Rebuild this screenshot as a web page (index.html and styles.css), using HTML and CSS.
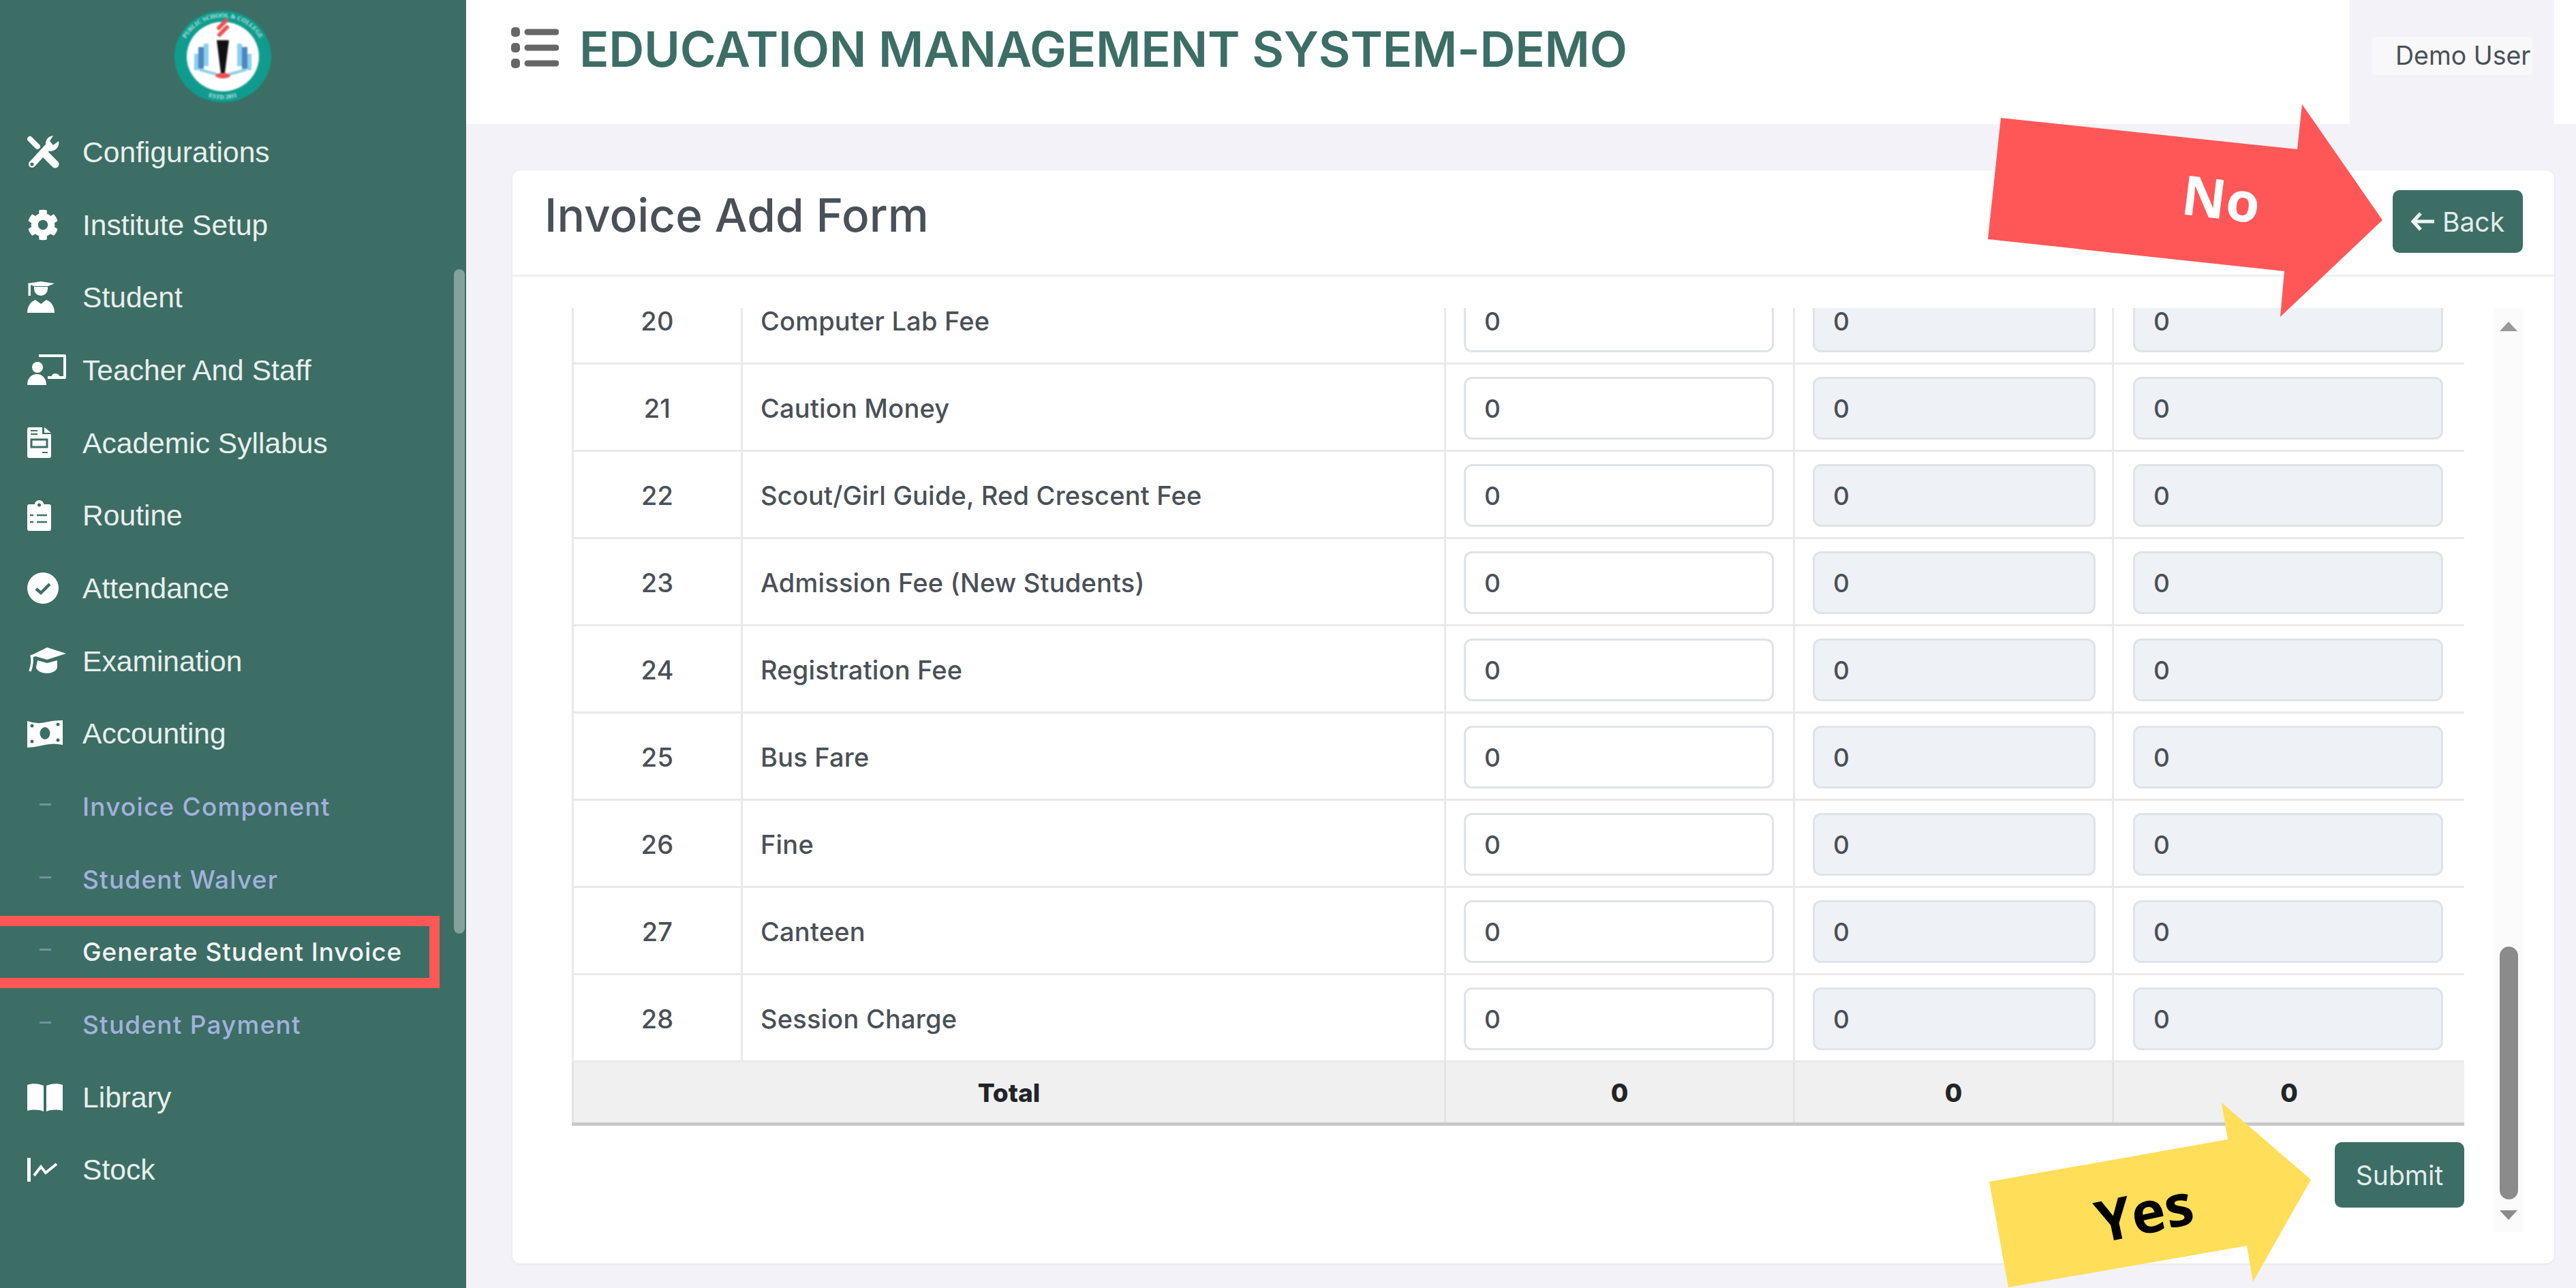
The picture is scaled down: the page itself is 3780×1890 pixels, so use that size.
FILE: index.html
```html
<!DOCTYPE html>
<html lang="en">

<head>
  <meta charset="UTF-8" />
  <meta name="viewport" content="width=device-width, initial-scale=1.0" />
  <title>Invoice Add Form</title>
  <link rel="stylesheet" href="styles.css">
</head>

<body>
  <aside class="sidebar">
    <div class="logo">
      <svg class="logo-img" viewBox="0 0 150 140">
        <defs>
          <path id="ringTop" d="M16 84 A61 57 0 1 1 134 84" />
          <path id="ringBottom" d="M40 122 A61 57 0 0 0 110 122" />
        </defs>
        <ellipse cx="75" cy="70" rx="71" ry="67" fill="#0f9c8e" />
        <ellipse cx="75" cy="70" rx="53" ry="51" fill="#fff" />
        <text class="ring-text"><textPath href="#ringTop" startOffset="50%" text-anchor="middle">PUBLIC SCHOOL &amp; COLLEGE</textPath></text>
        <text class="ring-text"><textPath href="#ringBottom" startOffset="50%" text-anchor="middle">ESTD 2011</textPath></text>
        <rect x="33" y="66" width="6" height="24" fill="#8ad0ea" />
        <rect x="39" y="56" width="8" height="32" fill="#4d86c0" />
        <rect x="47" y="51" width="7" height="33" fill="#8ad0ea" />
        <rect x="111" y="66" width="6" height="24" fill="#8ad0ea" />
        <rect x="103" y="56" width="8" height="32" fill="#4d86c0" />
        <rect x="96" y="51" width="7" height="33" fill="#8ad0ea" />
        <path d="M40 89 L66 96 M110 89 L84 96" stroke="#8ad0ea" stroke-width="4" />
        <path d="M66 46 H84 L78 94 H72 Z" fill="#111" />
        <path d="M70 38 L81 27 M69 28 L80 17" stroke="#ea5050" stroke-width="6" stroke-linecap="round" />
        <ellipse cx="75" cy="98" rx="11" ry="4" fill="#ea5050" />
      </svg>
    </div>
    <nav class="menu">
      <a class="menu-item">
        <span class="menu-icon">
          <svg viewBox="0 0 60 50">
            <path d="M4 6 L15 17" stroke="#fff" stroke-width="8" stroke-linecap="round" />
            <path d="M24 26 L41 43" stroke="#fff" stroke-width="11" stroke-linecap="round" />
            <path d="M7 43 L30 18" stroke="#fff" stroke-width="10" stroke-linecap="round" />
            <circle cx="7" cy="43" r="2.5" fill="#3c6e65" />
            <path d="M27 13 A12 12 0 0 1 38 1 L33 9 L38 15 L46 9 A12 12 0 0 1 30 23 Z" fill="#fff" />
          </svg>
        </span>
        <span>Configurations</span>
      </a>
      <a class="menu-item">
        <span class="menu-icon">
          <svg viewBox="0 0 60 50">
            <path transform="translate(0 2) scale(.09)" d="M487.4 315.7l-42.6-24.6c4.3-23.2 4.3-47 0-70.2l42.6-24.6c4.9-2.8 7.1-8.6 5.5-14-11.1-35.6-30-67.8-54.7-94.6-3.8-4.1-10-5.1-14.8-2.3L380.8 110c-17.9-15.4-38.5-27.3-60.8-35.1V25.8c0-5.6-3.9-10.5-9.4-11.7-36.7-8.2-74.3-7.8-109.2 0-5.5 1.2-9.4 6.1-9.4 11.7V75c-22.2 7.9-42.8 19.8-60.8 35.1L88.7 85.5c-4.9-2.8-11-1.9-14.8 2.3-24.7 26.7-43.6 58.9-54.7 94.6-1.7 5.4.6 11.2 5.5 14L67.3 221c-4.3 23.2-4.3 47 0 70.2l-42.6 24.6c-4.9 2.8-7.1 8.6-5.5 14 11.1 35.6 30 67.8 54.7 94.6 3.8 4.1 10 5.1 14.8 2.3l42.6-24.6c17.9 15.4 38.5 27.3 60.8 35.1v49.2c0 5.6 3.9 10.5 9.4 11.7 36.7 8.2 74.3 7.8 109.2 0 5.5-1.2 9.4-6.1 9.4-11.7v-49.2c22.2-7.9 42.8-19.8 60.8-35.1l42.6 24.6c4.9 2.8 11 1.9 14.8-2.3 24.7-26.7 43.6-58.9 54.7-94.6 1.5-5.5-.7-11.3-5.6-14.1zM256 336c-44.1 0-80-35.9-80-80s35.9-80 80-80 80 35.9 80 80-35.9 80-80 80z" fill="#fff" />
          </svg>
        </span>
        <span>Institute Setup</span>
      </a>
      <a class="menu-item">
        <span class="menu-icon">
          <svg viewBox="0 0 60 50">
            <path d="M0 4 L20 1 L40 4 L30 8 H10 Z" fill="#fff" />
            <rect x="1.5" y="4" width="3.5" height="18" fill="#fff" />
            <path d="M10 9 H30 V12 A10 10 0 0 1 10 12 Z" fill="#fff" />
            <path d="M0 47 C0 36 6 30 12 28 L20 34 L28 28 C34 30 40 36 40 47 Z" fill="#fff" />
          </svg>
        </span>
        <span>Student</span>
      </a>
      <a class="menu-item">
        <span class="menu-icon">
          <svg viewBox="0 0 60 50">
            <path d="M17 4 H55 V36 H30" fill="none" stroke="#fff" stroke-width="4" stroke-linejoin="round" />
            <path d="M35 36 Q36 30 41 30 Q47 30 48 36 Z" fill="#fff" />
            <circle cx="15" cy="21" r="8" fill="#fff" />
            <path d="M0 47 C0 37 6 31 14 31 C22 31 28 37 28 47 Z" fill="#fff" />
          </svg>
        </span>
        <span>Teacher And Staff</span>
      </a>
      <a class="menu-item">
        <span class="menu-icon">
          <svg viewBox="0 0 60 50">
            <path d="M0 5 Q0 2 3 2 H22 V12 H35 V44 Q35 47 32 47 H3 Q0 47 0 44 Z" fill="#fff" />
            <path d="M25 2 L35 10 H25 Z" fill="#fff" />
            <path d="M5 7 H15 M5 12 H15 M22 39 H30" stroke="#3c6e65" stroke-width="2" />
            <rect x="6" y="20" width="23" height="11" fill="none" stroke="#3c6e65" stroke-width="3" />
          </svg>
        </span>
        <span>Academic Syllabus</span>
      </a>
      <a class="menu-item">
        <span class="menu-icon">
          <svg viewBox="0 0 60 50">
            <rect y="8" width="35" height="39" rx="3" fill="#fff" />
            <circle cx="17.5" cy="9" r="7" fill="#fff" />
            <circle cx="17.5" cy="9" r="2.5" fill="#3c6e65" />
            <path d="M14 24 H29 M14 34 H29 M4 24 H9 M4 34 H9" stroke="#3c6e65" stroke-width="2.5" />
          </svg>
        </span>
        <span>Routine</span>
      </a>
      <a class="menu-item">
        <span class="menu-icon">
          <svg viewBox="0 0 60 50">
            <circle cx="23" cy="25" r="23" fill="#fff" />
            <path d="M13 26 L20 32 L33 19" fill="none" stroke="#3c6e65" stroke-width="4.5" />
          </svg>
        </span>
        <span>Attendance</span>
      </a>
      <a class="menu-item">
        <span class="menu-icon">
          <svg viewBox="0 0 60 50">
            <path d="M29 5 L57 14 L29 23 L12 18 L7 20 L5 17 Z" fill="#fff" />
            <path d="M6 16 Q9 26 4 40" fill="none" stroke="#fff" stroke-width="3.5" />
            <path d="M15 24 L29 28 L44 24 V34 C44 39 36 43 29 43 C21 43 13 39 13 34 Z" fill="#fff" />
          </svg>
        </span>
        <span>Examination</span>
      </a>
      <a class="menu-item">
        <span class="menu-icon">
          <svg viewBox="0 0 60 50">
            <path d="M0 6 Q14 11 26 8 T52 5 V41 Q38 38 26 41 T0 45 Z" fill="#fff" />
            <ellipse cx="26" cy="24" rx="7.5" ry="9" fill="#3c6e65" />
            <circle cx="7" cy="13" r="2.5" fill="#3c6e65" />
            <circle cx="45" cy="11" r="2.5" fill="#3c6e65" />
            <circle cx="7" cy="36" r="2.5" fill="#3c6e65" />
            <circle cx="45" cy="34" r="2.5" fill="#3c6e65" />
          </svg>
        </span>
        <span>Accounting</span>
      </a>
      <a class="menu-item sub-item"><span class="menu-icon"><i class="dash"></i></span><span>Invoice Component</span></a>
      <a class="menu-item sub-item"><span class="menu-icon"><i class="dash"></i></span><span>Student Walver</span></a>
      <a class="menu-item sub-item active"><span class="menu-icon"><i class="dash"></i></span><span>Generate Student Invoice</span></a>
      <a class="menu-item sub-item"><span class="menu-icon"><i class="dash"></i></span><span>Student Payment</span></a>
      <a class="menu-item">
        <span class="menu-icon">
          <svg viewBox="0 0 60 50">
            <path d="M0 7 C8 4 17 5 24 8 V46 C17 43 8 43 0 45 Z" fill="#fff" />
            <path d="M52 7 C44 4 35 5 28 8 V46 C35 43 44 43 52 45 Z" fill="#fff" />
          </svg>
        </span>
        <span>Library</span>
      </a>
      <a class="menu-item">
        <span class="menu-icon">
          <svg viewBox="0 0 60 50">
            <rect y="7" width="5" height="35" fill="#fff" />
            <path d="M10 33 L20 20 L27 29 L43 16" fill="none" stroke="#fff" stroke-width="4" />
          </svg>
        </span>
        <span>Stock</span>
      </a>
    </nav>
    <div class="side-thumb"></div>
  </aside>

  <div class="main">
    <header class="topbar">
      <div class="brand">
        <svg class="brand-icon" viewBox="0 0 70 60">
          <rect y="0" width="13" height="14" rx="5" fill="#666" />
          <rect y="23" width="13" height="14" rx="5" fill="#666" />
          <rect y="46" width="13" height="14" rx="5" fill="#666" />
          <path d="M24 7 H66 M24 30 H66 M24 53 H66" stroke="#666" stroke-width="9" stroke-linecap="round" />
        </svg>
        <h1>EDUCATION MANAGEMENT SYSTEM-DEMO</h1>
      </div>
      <div class="user-area">
        <span class="user-chip">Demo User</span>
      </div>
    </header>

    <section class="page">
      <div class="card">
        <div class="card-head">
          <h2>Invoice Add Form</h2>
          <a class="btn btn-back">
            <svg viewBox="0 0 36 30">
              <path d="M14 3 L3 15 L14 27 M3 15 H34" fill="none" stroke="#eef4f2" stroke-width="5" />
            </svg>
            Back
          </a>
        </div>
        <div class="card-body">
          <div class="form-scroll">
            <table class="fee-table">
              <colgroup>
                <col class="c-no">
                <col class="c-name">
                <col class="c-a">
                <col class="c-b">
                <col class="c-c">
              </colgroup>
              <tbody>
                <tr>
                  <td class="no">20</td>
                  <td>Computer Lab Fee</td>
                  <td><input value="0"></td>
                  <td class="mid"><input value="0" disabled></td>
                  <td class="last"><input value="0" disabled></td>
                </tr>
                <tr>
                  <td class="no">21</td>
                  <td>Caution Money</td>
                  <td><input value="0"></td>
                  <td class="mid"><input value="0" disabled></td>
                  <td class="last"><input value="0" disabled></td>
                </tr>
                <tr>
                  <td class="no">22</td>
                  <td>Scout/Girl Guide, Red Crescent Fee</td>
                  <td><input value="0"></td>
                  <td class="mid"><input value="0" disabled></td>
                  <td class="last"><input value="0" disabled></td>
                </tr>
                <tr>
                  <td class="no">23</td>
                  <td>Admission Fee (New Students)</td>
                  <td><input value="0"></td>
                  <td class="mid"><input value="0" disabled></td>
                  <td class="last"><input value="0" disabled></td>
                </tr>
                <tr>
                  <td class="no">24</td>
                  <td>Registration Fee</td>
                  <td><input value="0"></td>
                  <td class="mid"><input value="0" disabled></td>
                  <td class="last"><input value="0" disabled></td>
                </tr>
                <tr>
                  <td class="no">25</td>
                  <td>Bus Fare</td>
                  <td><input value="0"></td>
                  <td class="mid"><input value="0" disabled></td>
                  <td class="last"><input value="0" disabled></td>
                </tr>
                <tr>
                  <td class="no">26</td>
                  <td>Fine</td>
                  <td><input value="0"></td>
                  <td class="mid"><input value="0" disabled></td>
                  <td class="last"><input value="0" disabled></td>
                </tr>
                <tr>
                  <td class="no">27</td>
                  <td>Canteen</td>
                  <td><input value="0"></td>
                  <td class="mid"><input value="0" disabled></td>
                  <td class="last"><input value="0" disabled></td>
                </tr>
                <tr>
                  <td class="no">28</td>
                  <td>Session Charge</td>
                  <td><input value="0"></td>
                  <td class="mid"><input value="0" disabled></td>
                  <td class="last"><input value="0" disabled></td>
                </tr>
              </tbody>
              <tfoot>
                <tr>
                  <th colspan="2">Total</th>
                  <th>0</th>
                  <th>0</th>
                  <th>0</th>
                </tr>
              </tfoot>
            </table>
            <div class="form-actions">
              <button class="btn btn-submit">Submit</button>
            </div>
          </div>
          <div class="scrollbar">
            <i class="arrow-up"></i>
            <div class="thumb"></div>
            <i class="arrow-down"></i>
          </div>
        </div>
      </div>
    </section>
  </div>

  <!-- annotations drawn over the screenshot -->
  <svg class="callout callout-no" viewBox="0 0 579 312">
    <polygon points="19,20 454,66 461,0 579,170 429,312 435,245 0,198" fill="#ff5757" />
    <text x="342" y="168" transform="rotate(7 342 141)">No</text>
  </svg>
  <svg class="callout callout-yes" viewBox="0 0 472 272">
    <polygon points="0,116 350,54 341,0 472,113 387,263 378,210 28,271" fill="#ffde59" />
    <text x="228" y="192" transform="rotate(-12 228 164)">Yes</text>
  </svg>
</body>

</html>
```

FILE: styles.css
```css
* {
  box-sizing: border-box;
}

html,
body {
  margin: 0;
  height: 100%;
  overflow: hidden;
}

body {
  display: flex;
  position: relative;
  font-family: "Inter", "Liberation Sans", sans-serif;
  background: #f2f2f8;
  color: #495057;
}

/* sidebar */
.sidebar {
  position: relative;
  flex: none;
  width: 684px;
  background: #3c6e65;
  font-family: "Liberation Sans", Arial, sans-serif;
}

.logo {
  height: 170px;
  padding: 13px 0 0 252px;
}

.logo-img {
  display: block;
  width: 150px;
  height: 140px;
  filter: blur(.9px);
}

.ring-text {
  font-family: "Liberation Serif", serif;
  font-size: 9px;
  font-weight: 700;
  fill: #cfeee9;
}

.menu-item {
  display: flex;
  align-items: center;
  height: 106.7px;
  padding-left: 40px;
  font-size: 42.6px;
  color: #e9efed;
}

.menu-icon {
  display: flex;
  align-items: center;
  flex: none;
  width: 81px;
}

.menu-icon svg {
  display: block;
  width: 60px;
  height: 50px;
}

.sub-item {
  font-family: "Inter", "Liberation Sans", sans-serif;
  font-size: 37px;
  font-weight: 500;
  letter-spacing: 1.2px;
  color: #a3b1de;
}

.sub-item.active {
  width: 645px;
  letter-spacing: .9px;
  color: #f2f4f6;
  border: 15px solid #ff5757;
  border-left: 0;
}

.dash {
  display: block;
  width: 17px;
  height: 3px;
  margin: -6px 0 0 18px;
  background: #6f959b;
}

.side-thumb {
  position: absolute;
  top: 395px;
  left: 666px;
  width: 16px;
  height: 975px;
  border-radius: 8px;
  background: #84a19b;
}

/* top bar */
.main {
  display: flex;
  flex-direction: column;
  flex: 1;
  min-width: 0;
}

.topbar {
  display: flex;
  flex: none;
  height: 182px;
  padding-right: 32px;
  background: #fff;
}

.brand {
  display: flex;
  flex: 1;
  align-items: flex-start;
  padding: 40px 0 0 66px;
}

.brand-icon {
  flex: none;
  width: 70px;
  height: 60px;
  margin-right: 30px;
}

.brand h1 {
  margin: -8px 0 0;
  font-size: 72px;
  line-height: 80px;
  font-weight: 600;
  letter-spacing: -.25px;
  color: #3c6e65;
  white-space: nowrap;
}

.user-area {
  flex: none;
  width: 300px;
  padding: 54px 0 0 33px;
  background: #f2f2f8;
}

.user-chip {
  display: block;
  width: 235px;
  height: 56px;
  padding-left: 34px;
  background: #f8f8fa;
  font-size: 37.5px;
  line-height: 56px;
  white-space: nowrap;
}

/* card */
.page {
  flex: 1;
  min-height: 0;
  padding: 68px 32px 36px 68px;
}

.card {
  display: flex;
  flex-direction: column;
  height: 100%;
  border-radius: 12px;
  background: #fff;
  box-shadow: 0 1px 4px rgba(0, 0, 0, .06);
}

.card-head {
  display: flex;
  flex: none;
  align-items: flex-start;
  justify-content: space-between;
  height: 156px;
  padding: 29px 46px 0 47px;
  border-bottom: 3px solid #eeeff1;
}

.card-head h2 {
  margin: 0;
  font-size: 67.5px;
  line-height: 74px;
  font-weight: 500;
}

.btn {
  display: flex;
  align-items: center;
  justify-content: center;
  border: 0;
  border-radius: 10px;
  background: #3c6e65;
  color: #e3ecea;
  font-family: "Inter", "Liberation Sans", sans-serif;
  font-size: 39px;
}

.btn-back {
  gap: 10px;
  width: 191px;
  height: 92px;
}

.btn-back svg {
  width: 36px;
  height: 30px;
}

.btn-submit {
  width: 190px;
  height: 96px;
}

.card-body {
  display: flex;
  flex: 1;
  min-height: 0;
  padding: 46px 0 46px 87px;
}

.form-scroll {
  flex: none;
  width: 2777px;
  overflow: hidden;
}

/* table */
.fee-table {
  width: 2777px;
  margin-top: -48px;
  border-collapse: collapse;
  table-layout: fixed;
  font-size: 38px;
}

.c-no {
  width: 248px;
}

.c-name {
  width: 1032px;
}

.c-a {
  width: 512px;
}

.c-b {
  width: 468px;
}

.c-c {
  width: 517px;
}

.fee-table td {
  height: 128px;
  padding: 3px 28px 0 26px;
  border: 3px solid #e8e9eb;
  font-weight: 500;
  line-height: 34px;
  letter-spacing: .2px;
}

.fee-table td.no {
  padding: 3px 28px 0;
  text-align: center;
}

.fee-table td.mid {
  padding: 3px 24px 0 26px;
}

.fee-table td.last {
  padding: 3px 31px 0 28px;
}

.fee-table input {
  display: block;
  width: 100%;
  height: 92px;
  padding: 0 27px;
  border: 3px solid #dfe3e8;
  border-radius: 12px;
  background: #fff;
  color: #495057;
  font-family: "Inter", "Liberation Sans", sans-serif;
  font-size: 37px;
  font-weight: 500;
  opacity: 1;
}

.fee-table input:disabled {
  background: #eef1f6;
}

.fee-table th {
  height: 92px;
  border: 3px solid #e3e3e3;
  border-bottom: 5px solid #c8c8c8;
  background: #f0f0f0;
  color: #212529;
  font-size: 37px;
  font-weight: 800;
}

.form-actions {
  display: flex;
  justify-content: flex-end;
  margin-top: 24px;
}

/* inner scrollbar */
.scrollbar {
  display: flex;
  flex-direction: column;
  align-items: center;
  flex: none;
  width: 44px;
  margin-left: 43px;
  padding: 20px 0 18px;
  background: #fbfbfb;
}

.arrow-up,
.arrow-down {
  flex: none;
  width: 0;
  height: 0;
  border-left: 13px solid transparent;
  border-right: 13px solid transparent;
}

.arrow-up {
  border-bottom: 14px solid #999;
}

.arrow-down {
  margin-top: 16px;
  border-top: 14px solid #8b8b8b;
}

.thumb {
  flex: none;
  width: 27px;
  height: 371px;
  margin-top: auto;
  border-radius: 14px;
  background: #8b8b8b;
}

/* annotation arrows */
.callout {
  position: absolute;
}

.callout-no {
  top: 153px;
  left: 2917px;
  width: 579px;
  height: 312px;
}

.callout-no text {
  font-family: "Open Sans", sans-serif;
  font-size: 80px;
  font-weight: 700;
  text-anchor: middle;
  fill: #fff;
}

.callout-yes {
  top: 1618px;
  left: 2919px;
  width: 472px;
  height: 272px;
}

.callout-yes text {
  font-family: "Open Sans", sans-serif;
  font-size: 84px;
  font-weight: 700;
  text-anchor: middle;
  fill: #000;
}
```
